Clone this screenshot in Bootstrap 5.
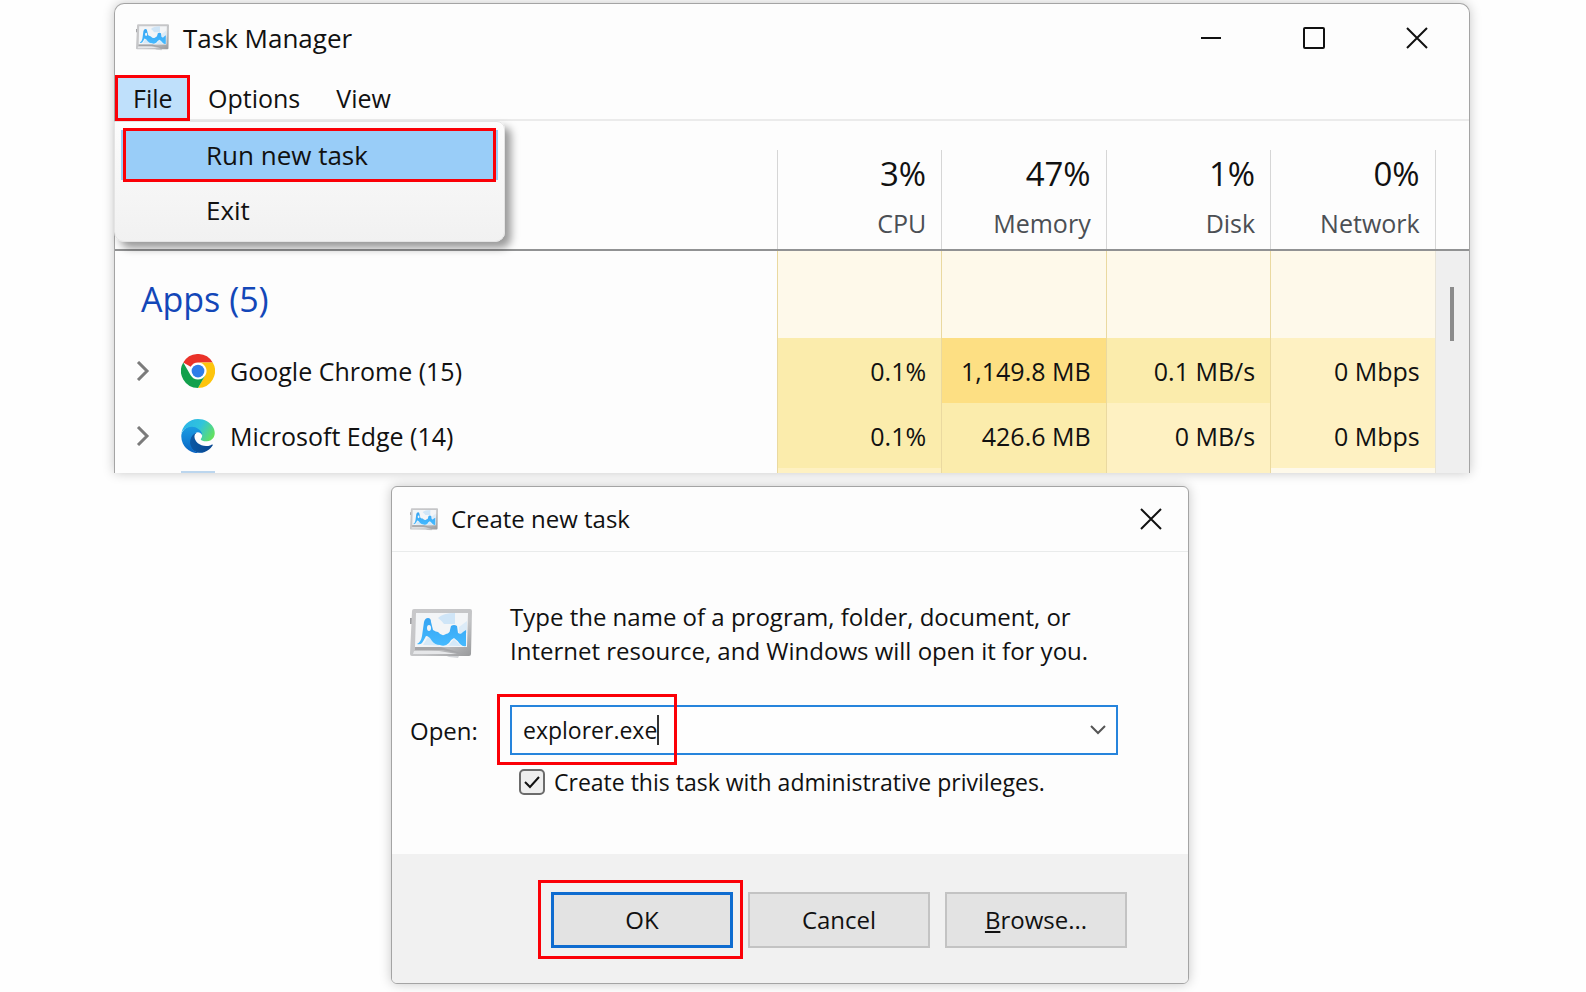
<!DOCTYPE html>
<html lang="en">
<head>
<meta charset="utf-8">
<meta name="viewport" content="width=device-width, initial-scale=1">
<title>Task Manager</title>
<link rel="stylesheet" href="https://cdn.jsdelivr.net/npm/bootstrap@5.3.0/dist/css/bootstrap.min.css">
<style>
  body { font-family: "Open Sans", "Noto Sans", sans-serif; font-size: 25px; line-height: 34px; color: #111; background: #fefefe; }
  .page { padding: 3px 116px 8px 114px; }
  svg { display: block; flex: none; }
  .win { background: #fdfdfd; border: 1px solid #a4a4a4; box-shadow: 0 0 12px rgba(0,0,0,.22); }
  .plain-btn { border: 0; background: none; padding: 0; color: inherit; }

  /* Task Manager window */
  .tm { border-bottom: 0; border-radius: 10px 10px 0 0; }
  .tm-head { height: 71px; padding: 0 41px 4px 21px; font-size: 26px; }
  .tm-title { margin-left: 14px; }
  .caption-btns { gap: 81px; }
  .menu-bar { height: 46px; border-bottom: 2px solid #ebebeb; }
  .menu-bar .nav-link { height: 46px; padding: 6px 18px; color: #111; line-height: 34px; }
  .menu-bar .file-link { width: 75px; background: #bfe0fb; }
  .marked { position: relative; }
  .marked::after { content: ""; position: absolute; inset: var(--out, 0); border: 3px solid #fb0007; pointer-events: none; z-index: 2; }
  .file-menu { --bs-dropdown-font-size: 26px; top: 100%; left: -1px; width: 391px; margin: 0; padding: 8px 6px 1px; border: 1px solid #e4e4e4; border-radius: 0 8px 10px 10px; background: linear-gradient(#fcfcfc, #f1f1f1); box-shadow: 6px 6px 8px rgba(0,0,0,.4); }
  .file-menu .dropdown-item { height: 50px; margin-bottom: 5px; padding: 8px 85px; line-height: 34px; color: #111; }
  .file-menu .active { background: #99cdf8; }
  .file-menu .active::after { inset: -2px 2px -2px 2px; }

  .proc { table-layout: fixed; margin-top: 29px; }
  .proc th, .proc td { font-weight: 400; text-align: right; padding: 0 15px 0 0; border-left: 1px solid #d6d6d6; }
  .proc th:first-child, .proc td:first-child { border-left: 0; text-align: left; }
  .proc thead tr { height: 100px; border-bottom: 2px solid #919293; }
  .proc thead th { padding-bottom: 6px; color: #4b4f54; }
  .proc thead strong { display: block; font-weight: 400; font-size: 33px; line-height: 40px; margin-bottom: 12px; color: #111; }
  .proc tbody td { border-left-color: #ead9a0; }
  .col-metric { width: 12.15%; }
  .col-scroll { width: 2.5%; }
  .group-row { height: 88px; }
  .proc-row { height: 65px; }
  .next-row { height: 5px; line-height: 0; }
  .group-title { font-size: 34px; color: #1347b8; padding: 9px 0 0 26px !important; }
  .proc-name { gap: 15px; padding-left: 21px; }
  .proc-name .plain-btn { margin-right: 16px; }
  .next-icon { height: 2px; width: 34px; margin: 3px 0 0 66px; background: #bcd6ee; }
  .heat-0 { background: #fef9ea; }
  .heat-1 { background: #fef1c2; }
  .heat-2 { background: #fbecac; }
  .heat-3 { background: #fddf83; }
  .proc .track { background: #efefef; border-left-color: #e8e4d8; padding: 36px 14px 0; vertical-align: top; }
  .thumb { width: 4px; height: 54px; background: #8b8b8b; }

  /* Create new task dialog */
  .dlg { width: 798px; max-width: 100%; margin-top: 13px; border-radius: 6px; overflow: hidden; font-size: 24px; }
  .dlg-head { height: 65px; padding: 0 26px 0 18px; border-bottom: 1px solid #e9ebeb; gap: 13px; }
  .dlg-body { padding: 48px 70px 55px 18px; }
  .intro { gap: 38px; margin-bottom: 37px; }
  .open-row label { width: 100px; padding-top: 2px; }
  .combo { border: 2px solid #2684dc; height: 50px; background: #fefefe; }
  .combo input { font-size: 23px; line-height: 34px; color: #111; padding: 4px 11px; border: 0; background: none; outline: 0; }
  .combo .plain-btn { width: 36px; }
  .combo-mark { position: absolute; z-index: 3; inset: -13px auto -12px -15px; width: 180px; border: 3px solid #fb0007; pointer-events: none; }
  .caret-bar { position: absolute; left: 145px; top: 8px; width: 2px; height: 30px; background: #333; }
  .admin { gap: 9px; padding: 10px 0 0 109px; font-size: 23px; }
  .admin .form-check-input { width: 26px; height: 26px; margin: 0; border: 2px solid #6b6b6b; border-radius: 5px; background-color: #eee; box-shadow: none; }
  .admin .form-check-input:checked { background-image: url("data:image/svg+xml,%3csvg xmlns='http://www.w3.org/2000/svg' viewBox='0 0 22 22'%3e%3cpath fill='none' stroke='%23111' stroke-width='2' d='M4 11l5 5 9-10'/%3e%3c/svg%3e"); }
  .dlg-foot { background: #f1f1f1; padding: 38px 61px 35px; gap: 15px; }
  .dlg-foot .btn { width: 182px; height: 56px; border: 2px solid #c3c3c3; border-radius: 0; background: #e3e3e3; color: #111; font-size: 24px; line-height: 34px; padding: 0; }
  .dlg-foot .ok-btn { border: 3px solid #0f6cd0; }
  .ok-mark { --out: -12px -10px -11px -13px; }
</style>
</head>
<body>
<svg width="0" height="0" class="position-absolute" aria-hidden="true">
  <defs>
    <linearGradient id="frame" x1="0" y1="0" x2="1" y2="1"><stop offset="0" stop-color="#c9c9cb"/><stop offset=".6" stop-color="#c4c5c7"/><stop offset="1" stop-color="#98999b"/></linearGradient>
    <linearGradient id="wave" x1="0" y1="0" x2="0" y2="1"><stop offset="0" stop-color="#36a4f2"/><stop offset="1" stop-color="#45baff"/></linearGradient>
    <linearGradient id="edgeDark" x1="0" y1="0" x2="1" y2="0"><stop offset="0" stop-color="#0c59a4"/><stop offset="1" stop-color="#084690"/></linearGradient>
    <linearGradient id="edgeMid" x1="0" y1="0" x2="0" y2="1"><stop offset="0" stop-color="#1b9de2"/><stop offset=".5" stop-color="#1283d6"/><stop offset="1" stop-color="#0a62c0"/></linearGradient>
    <linearGradient id="edgeTop" x1="0" y1=".3" x2="1" y2=".7"><stop offset="0" stop-color="#2bb4e8"/><stop offset=".5" stop-color="#30c4dc"/><stop offset="1" stop-color="#66e25a"/></linearGradient>
    <symbol id="tm-icon" viewBox="0 0 62 50">
      <path fill="#9c9da0" d="M0 9h3v6H0z"/>
      <path fill="#d3d5d8" d="M30 44l20 1-2 4-9-1z"/>
      <path fill="url(#frame)" d="M4 0h56q2 0 2 2l-1 43q0 2-2 2L2 47q-2 0-2-2L2 2q0-2 2-2z"/>
      <path fill="#f3f5f7" d="M6 4h52l-1 34H5z"/>
      <path fill="#cfe5f7" d="M28 9q5-5 17-5v11H34q-2-3-6-6z"/>
      <path fill="#dcebf7" d="M49 18l8-6v12h-8z"/>
      <path fill="#d5e9f8" d="M13 36l5-8 12 9h8l6-7 7 7z"/>
      <path fill="url(#wave)" fill-rule="evenodd" d="M7 35q4-2 5-8l2-14q1-4 4-4 3 0 3 4l2 8q3 2 5 2 4 5 8 2 4-1 4-4l1-4q3-2 6 0l1 7q3 2 5-1l3-2v16q-3 1-6-2-3-4-6-6-4 2-5 5-4 4-9 2-5 0-8-4-3-5-6-5-2 4-4 7-2 2-5 1zM17 19a2 3 0 1 0 4 0 2 3 0 1 0-4 0z"/>
      <path fill="#a4a5a8" d="M5 38l26 0 26 8-24-5-28 0z"/>
      <path fill="#e6e7e9" d="M4 42h25l18 3H3z"/>
    </symbol>
    <symbol id="x-icon" viewBox="0 0 22 22"><path fill="none" stroke="#111" stroke-width="2" d="M1 1l20 20M21 1L1 21"/></symbol>
    <symbol id="chev" viewBox="0 0 14 20"><path fill="none" stroke="#7b7b7b" stroke-width="3" d="M2 1l9 9-9 9"/></symbol>
  </defs>
</svg>

<main class="page">
  <section class="win tm" aria-label="Task Manager">
    <header class="tm-head d-flex align-items-center">
      <svg width="33" height="27"><use href="#tm-icon"/></svg>
      <span class="tm-title">Task Manager</span>
      <div class="caption-btns d-flex align-items-center ms-auto">
        <button class="plain-btn" aria-label="Minimize"><svg width="22" height="22"><path stroke="#111" stroke-width="2" d="M1 11h20"/></svg></button>
        <button class="plain-btn" aria-label="Maximize"><svg width="22" height="22"><rect x="1" y="1" width="20" height="20" rx="1" fill="none" stroke="#111" stroke-width="2"/></svg></button>
        <button class="plain-btn" aria-label="Close"><svg width="22" height="22"><use href="#x-icon"/></svg></button>
      </div>
    </header>
    <nav class="menu-bar">
      <ul class="nav">
        <li class="nav-item dropdown">
          <a class="nav-link file-link marked" href="#" role="button" aria-expanded="true">File</a>
          <ul class="dropdown-menu file-menu show">
            <li><a class="dropdown-item active marked" href="#">Run new task</a></li>
            <li><a class="dropdown-item" href="#">Exit</a></li>
          </ul>
        </li>
        <li class="nav-item"><a class="nav-link" href="#">Options</a></li>
        <li class="nav-item"><a class="nav-link" href="#">View</a></li>
      </ul>
    </nav>
    <table class="proc w-100">
      <colgroup><col><col class="col-metric"><col class="col-metric"><col class="col-metric"><col class="col-metric"><col class="col-scroll"></colgroup>
      <thead>
        <tr>
          <th></th>
          <th scope="col"><strong>3%</strong>CPU</th>
          <th scope="col"><strong>47%</strong>Memory</th>
          <th scope="col"><strong>1%</strong>Disk</th>
          <th scope="col"><strong>0%</strong>Network</th>
          <th></th>
        </tr>
      </thead>
      <tbody>
        <tr class="group-row">
          <td class="group-title">Apps (5)</td>
          <td class="heat-0"></td><td class="heat-0"></td><td class="heat-0"></td><td class="heat-0"></td>
          <td class="track" rowspan="4"><div class="thumb"></div></td>
        </tr>
        <tr class="proc-row">
          <td><div class="proc-name d-flex align-items-center">
            <button class="plain-btn" aria-label="Expand Google Chrome"><svg width="14" height="20"><use href="#chev"/></svg></button>
            <svg width="34" height="34" viewBox="0 0 48 48">
              <path fill="#ea3229" d="M3.2 12A24 24 0 0 1 44.8 12H24a12 12 0 0 0-10.4 6z"/>
              <path fill="#fdc40c" d="M44.8 12A24 24 0 0 1 24 48l10.4-18A12 12 0 0 0 24 12z"/>
              <path fill="#12a04c" d="M24 48A24 24 0 0 1 3.2 12l10.4 18a12 12 0 0 0 20.8 0z"/>
              <circle cx="24" cy="24" r="11" fill="#fff"/><circle cx="24" cy="24" r="9" fill="#2f7de9"/>
            </svg>
            <span>Google Chrome (15)</span></div></td>
          <td class="heat-2">0.1%</td><td class="heat-3">1,149.8 MB</td><td class="heat-2">0.1 MB/s</td><td class="heat-1">0 Mbps</td>
        </tr>
        <tr class="proc-row">
          <td><div class="proc-name d-flex align-items-center">
            <button class="plain-btn" aria-label="Expand Microsoft Edge"><svg width="14" height="20"><use href="#chev"/></svg></button>
            <svg width="34" height="34" viewBox="0 0 256 260">
              <path fill="url(#edgeDark)" d="M235.68 195.46a93.73 93.73 0 01-10.54 4.71 101.87 101.87 0 01-35.9 6.46c-47.32 0-88.54-32.55-88.54-74.32A31.48 31.48 0 01117.13 105c-42.8 1.8-53.8 46.4-53.8 72.53 0 73.88 68.09 81.37 82.76 81.37 7.91 0 19.84-2.3 27-4.56l1.31-.44a128.34 128.34 0 0066.6-52.8 4 4 0 00-5.32-5.64z"/>
              <path fill="url(#edgeMid)" d="M105.73 246.63A79.2 79.2 0 0183 225.32a80.72 80.72 0 0129.5-120.06c3.12-1.47 8.45-4.13 15.54-4a32.35 32.35 0 0125.69 13 31.88 31.88 0 016.36 18.66c0-.21 24.46-79.6-80-79.6-43.9 0-80 41.66-80 78.21a130.15 130.15 0 0012.11 56 128 128 0 00156.38 67.11 75.55 75.55 0 01-62.78-8z"/>
              <path fill="url(#edgeTop)" d="M152.33 148.86c-.81 1.05-3.3 2.5-3.3 5.66 0 2.61 1.7 5.12 4.72 7.23 14.38 10 41.49 8.68 41.56 8.68a59.56 59.56 0 0030.27-8.35A61.38 61.38 0 00256 109.2c.26-22.41-8-37.31-11.34-43.91C223.45 23.81 177.72 0 128 0A128 128 0 000 126.2c.48-36.54 36.8-66.05 80-66.05 3.5 0 23.46.34 42 10.07 16.34 8.58 24.9 18.94 30.85 29.21 6.18 10.67 7.28 24.15 7.28 29.52s-2.74 13.33-7.8 19.91z"/>
            </svg>
            <span>Microsoft Edge (14)</span></div></td>
          <td class="heat-2">0.1%</td><td class="heat-2">426.6 MB</td><td class="heat-1">0 MB/s</td><td class="heat-1">0 Mbps</td>
        </tr>
        <tr class="next-row">
          <td><div class="next-icon"></div></td>
          <td class="heat-1"></td><td class="heat-2"></td><td class="heat-1"></td><td class="heat-0"></td>
        </tr>
      </tbody>
    </table>
  </section>

  <div class="pe-1">
    <form class="win dlg mx-auto" aria-label="Create new task">
      <header class="dlg-head d-flex align-items-center">
        <svg width="28" height="23"><use href="#tm-icon"/></svg>
        <span>Create new task</span>
        <button type="button" class="plain-btn ms-auto" aria-label="Close"><svg width="22" height="22"><use href="#x-icon"/></svg></button>
      </header>
      <div class="dlg-body">
        <div class="intro d-flex align-items-center">
          <svg width="62" height="50"><use href="#tm-icon"/></svg>
          <p class="mb-0">Type the name of a program, folder, document, or<br>Internet resource, and Windows will open it for you.</p>
        </div>
        <div class="open-row d-flex align-items-center">
          <label for="open">Open:</label>
          <div class="combo d-flex flex-fill position-relative">
            <input id="open" class="flex-fill" type="text" value="explorer.exe">
            <button type="button" class="plain-btn" aria-label="Show history"><svg width="16" height="10" class="mx-auto"><path fill="none" stroke="#555" stroke-width="2" d="M1 1l7 7 7-7"/></svg></button>
            <span class="caret-bar"></span>
            <span class="combo-mark"></span>
          </div>
        </div>
        <div class="admin d-flex align-items-center">
          <input class="form-check-input" type="checkbox" id="admin" checked>
          <label for="admin">Create this task with administrative privileges.</label>
        </div>
      </div>
      <footer class="dlg-foot d-flex justify-content-end">
        <div class="marked ok-mark"><button type="button" class="btn ok-btn">OK</button></div>
        <button type="button" class="btn">Cancel</button>
        <button type="button" class="btn"><u>B</u>rowse...</button>
      </footer>
    </form>
  </div>
</main>
<script src="https://cdn.jsdelivr.net/npm/bootstrap@5.3.0/dist/js/bootstrap.bundle.min.js"></script>
</body>
</html>
